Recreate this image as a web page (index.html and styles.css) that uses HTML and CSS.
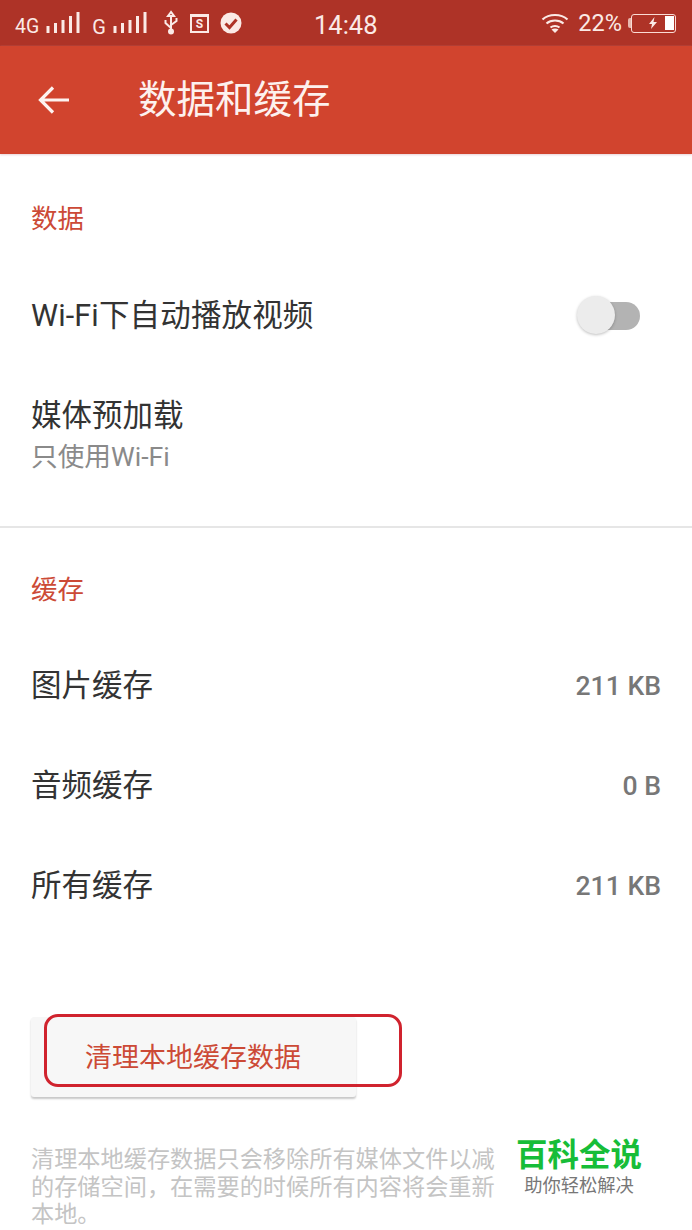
FILE: index.html
```html
<!DOCTYPE html>
<html lang="zh">
<head>
<meta charset="utf-8">
<title>数据和缓存</title>
<link rel="stylesheet" href="styles.css">
</head>
<body>
<div class="screen">
  <header class="status">
    <div class="status-left">
      <span class="net">4G</span>
      <svg class="bars" width="34" height="22" viewBox="0 0 34 22"><path d="M2 14v7M9.500 11v10M17 8v13M24.500 4v17M32 0v21" stroke="#fbeae6" stroke-width="3" fill="none"/></svg>
      <span class="net net-g">G</span>
      <svg class="bars" width="34" height="22" viewBox="0 0 34 22"><path d="M2 14v7M9.500 11v10M17 8v13M24.500 4v17M32 0v21" stroke="#fbeae6" stroke-width="3" fill="none"/></svg>
      <svg class="usb" width="16" height="26" viewBox="0 0 16 26"><path d="M8 2l-3 4h6zM8 5v17M8 18L2.500 13V10M8 15l5.500-4V8" stroke="#fbeae6" stroke-width="2" fill="none"/><circle cx="8" cy="21.500" r="3" fill="#fbeae6"/></svg>
      <span class="s-icon">S</span>
      <svg class="check" width="22" height="22" viewBox="0 0 22 22"><circle cx="11" cy="11" r="10.500" fill="#fbeae6"/><path d="M5.500 11.500l4 4 7-8" stroke="#ae3327" stroke-width="3" fill="none"/></svg>
    </div>
    <span class="clock">14:48</span>
    <div class="status-right">
      <svg width="28" height="22" viewBox="0 0 28 22"><path d="M1.500 7.500C8 1.500 20 1.500 26.500 7.500M5.500 11.500C10 7.500 18 7.500 22.500 11.500M9.500 15.500C12 13.500 16 13.500 18.500 15.500" stroke="#fbeae6" stroke-width="2.200" fill="none"/><path d="M14 21l-3.500-3.500c2-1.300 5-1.300 7 0z" fill="#fbeae6"/></svg>
      <span class="pct">22%</span>
      <div class="battery-cap"></div>
      <div class="battery">
        <svg width="10" height="12" viewBox="0 0 10 12"><path d="M6.500 0L1 7h3l-1 5 6-7H5.500z" fill="#fbeae6"/></svg>
        <span class="battery-level"></span>
      </div>
    </div>
  </header>
  <div class="appbar">
    <svg class="back" width="32" height="30" viewBox="0 0 32 30"><path d="M31 15H3M15 2.500L2.500 15 15 27.500" stroke="#fdf3f0" stroke-width="3.200" fill="none"/></svg>
    <h1 class="title">数据和缓存</h1>
  </div>

  <main class="content">
    <section class="group group-data">
      <h2 class="group-title">数据</h2>
      <div class="row row-first">
        <span class="row-label row-label-wide">Wi-Fi下自动播放视频</span>
        <span class="switch"><span class="switch-knob"></span></span>
      </div>
      <div class="row-stack">
        <span class="row-label">媒体预加载</span>
        <span class="row-sub">只使用Wi-Fi</span>
      </div>
    </section>
    <section class="group group-cache">
      <h2 class="group-title">缓存</h2>
      <div class="row row-first"><span class="row-label">图片缓存</span><span class="row-value">211 KB</span></div>
      <div class="row"><span class="row-label">音频缓存</span><span class="row-value">0 B</span></div>
      <div class="row"><span class="row-label">所有缓存</span><span class="row-value">211 KB</span></div>
    </section>
    <div class="action">
      <button class="clear-btn" type="button">清理本地缓存数据</button>
      <div class="annotation"></div>
    </div>
    <p class="note">清理本地缓存数据只会移除所有媒体文件以减<br>的存储空间，在需要的时候所有内容将会重新<br>本地。</p>
  </main>
  <div class="watermark">
    <div class="wm-title">百科全说</div>
    <div class="wm-sub">助你轻松解决</div>
  </div>
</div>
</body>
</html>
```
FILE: styles.css
```css
* { box-sizing: border-box; margin: 0; padding: 0; }
html, body { background: #fff; }
body {
  font-family: Roboto, "Noto Sans CJK SC", sans-serif;
  width: 692px;
  height: 1230px;
  overflow: hidden;
}
.screen { position: relative; width: 692px; height: 1230px; overflow: hidden; }

.status {
  height: 46px;
  background: #ae3327;
  color: #fbeae6;
  display: flex;
  align-items: center;
  position: relative;
  padding: 0 16px 0 15px;
  justify-content: space-between;
}
.status-left { display: flex; align-items: center; }
.net { font-size: 19.500px; margin-right: 7px; margin-top: 7px; }
.net-g { margin-left: 12px; margin-right: 7px; font-size: 20px; }
.usb { margin-left: 16px; }
.s-icon {
  width: 19px; height: 19px;
  margin-left: 11px;
  border: 2px solid #fbeae6;
  border-top-width: 3px;
  font-size: 12px;
  line-height: 14px;
  text-align: center;
  font-weight: 700;
}
.check { margin-left: 11px; }
.clock {
  font-size: 25.500px;
  position: absolute;
  left: 314px;
  top: 10px;
  line-height: 30px;
}
.status-right { display: flex; align-items: center; }
.pct { font-size: 23.500px; margin-left: 9px; margin-right: 6px; }
.battery-cap { width: 3px; height: 10px; background: #e8b8ae; border-radius: 2px 0 0 2px; }
.battery {
  width: 45px; height: 19px;
  border: 1.500px solid #fbdcd5;
  border-radius: 3px;
  display: flex;
  align-items: center;
  justify-content: flex-end;
  padding-right: 1px;
  gap: 7px;
}
.battery-level { width: 9px; height: 14px; background: #fff; }

.appbar {
  height: 108px;
  background: #d1442e;
  display: flex;
  align-items: center;
  padding-left: 38px;
  box-shadow: 0 1px 2px #e8d3d8;
  position: relative;
}
.back { flex: none; }
.title {
  margin-left: 68px;
  font-size: 38.500px;
  font-weight: 400;
  color: #fdf1ee;
  line-height: 50px;
}

.content { padding: 0 31px; }
.group-title {
  font-size: 26.500px;
  font-weight: 400;
  color: #cc4a36;
  line-height: 36px;
}
.group-data {
  padding: 47px 31px 0;
  height: 374px;
  border-bottom: 2px solid #e6e6e6;
  margin: 0 -31px;
}
.group-cache { padding-top: 44px; }
.row {
  height: 100px;
  display: flex;
  align-items: center;
  justify-content: space-between;
}
.row-first { margin-top: 29px; }
.group-cache .row-first { margin-top: 28px; }
.row-label { font-size: 30.500px; color: #333; line-height: 40px; }
.row-label-wide { letter-spacing: 0.15px; }
.row-value { font-size: 26.600px; font-weight: 500; color: #777; margin-top: -2px; }
.row-stack { display: flex; flex-direction: column; margin-top: 30px; }
.row-sub { font-size: 26.700px; color: #8a8a8a; line-height: 34px; margin-top: 4px; }
.switch {
  width: 62px; height: 28px;
  margin-right: 21px;
  position: relative;
  display: block;
  background: #b3b3b3;
  border-radius: 14px;
  margin-left: auto;
}
.switch-knob {
  position: absolute;
  left: -1px; top: -6px;
  width: 38px; height: 38px;
  border-radius: 50%;
  background: #ececec;
  box-shadow: 0 1px 3px rgba(0,0,0,.25);
}

.action { position: relative; margin-top: 81px; height: 80px; }
.clear-btn {
  width: 325px;
  height: 80px;
  background: #f7f7f7;
  border: 0;
  border-radius: 3px;
  box-shadow: 0 2px 2px rgba(0,0,0,.22);
  color: #cc4a36;
  font: 27px/40px Roboto, "Noto Sans CJK SC", sans-serif;
  text-align: left;
  padding: 2px 0 0 54px;
}
.annotation {
  position: absolute;
  left: 13px; top: -3px;
  width: 358px; height: 73px;
  border: 3px solid #d0232e;
  border-radius: 14px;
}
.note {
  margin-top: 49px;
  font-size: 23.200px;
  line-height: 27.500px;
  color: #c4c4c4;
  white-space: nowrap;
}
.watermark {
  position: absolute;
  left: 497px; top: 1133px;
  width: 164px; height: 76px;
  text-align: center;
  padding-top: 3px;
}
.wm-title { font-size: 31.500px; font-weight: 700; color: #17bd38; line-height: 40px; }
.wm-sub { font-size: 18.300px; color: #777; line-height: 24px; margin-top: -2px; }
```
